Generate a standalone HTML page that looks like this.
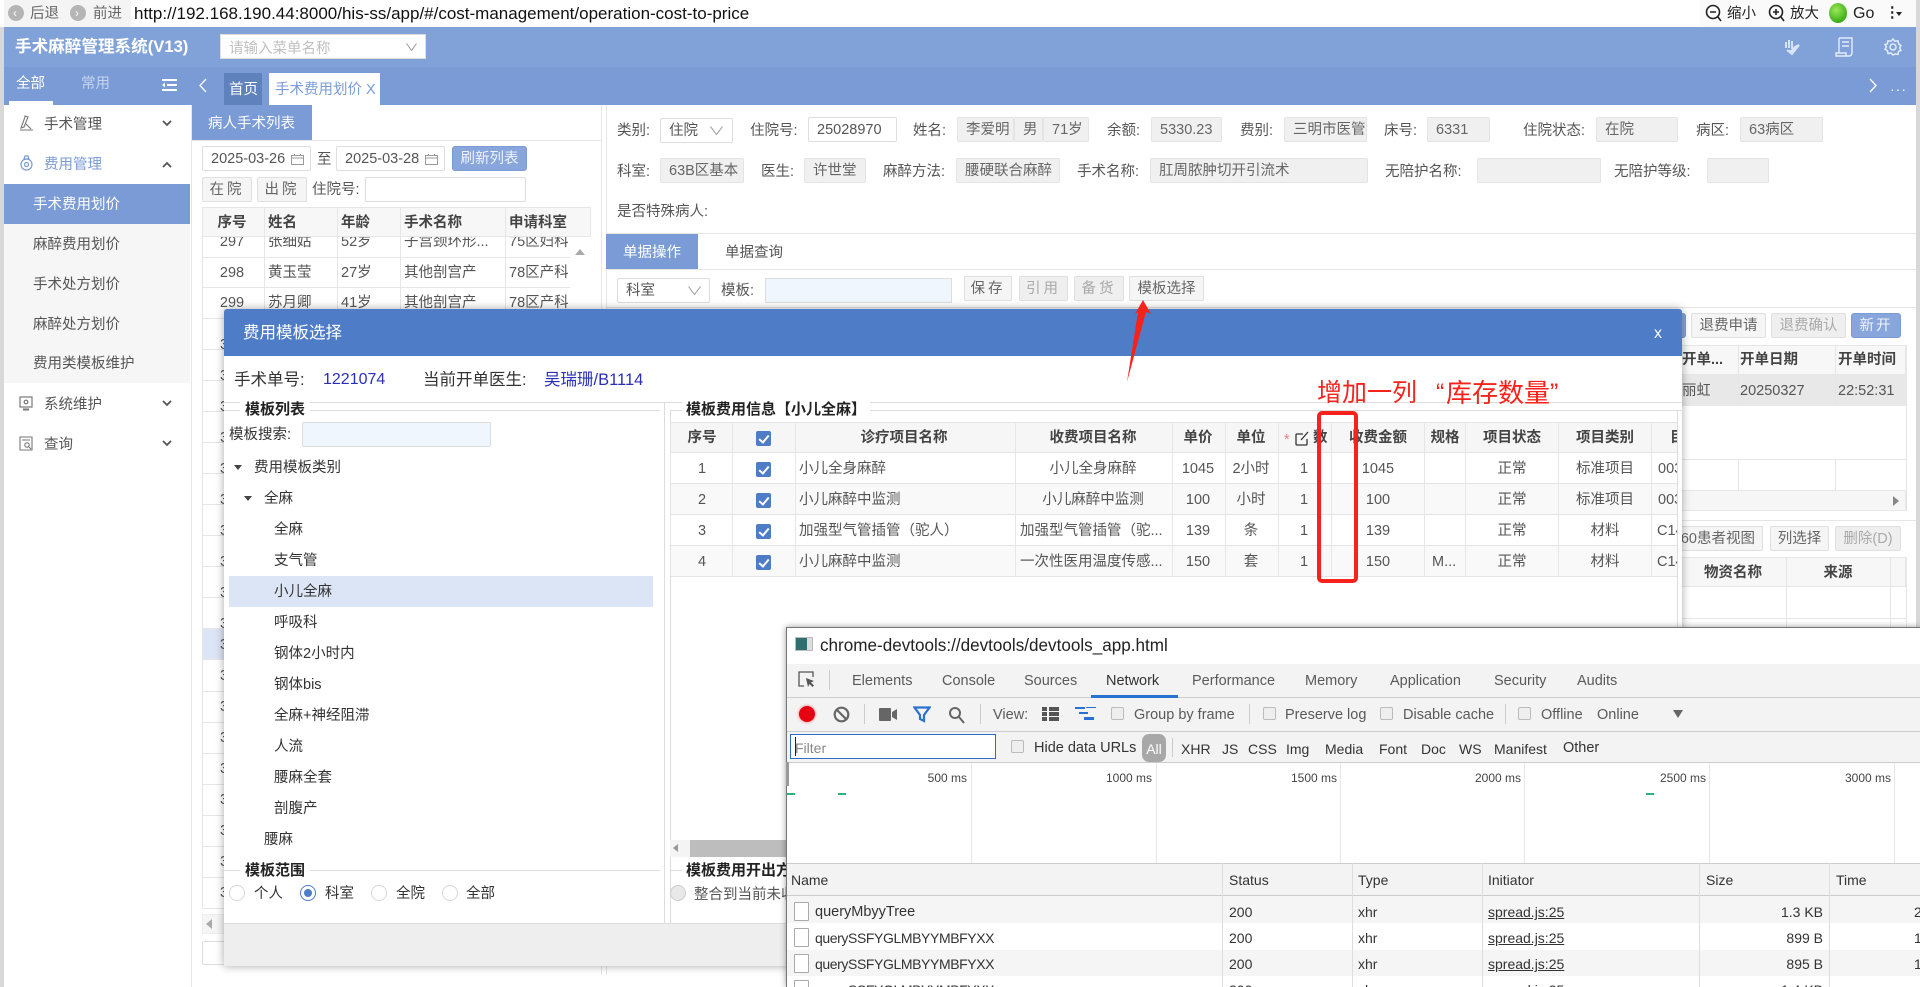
<!DOCTYPE html>
<html lang="zh"><head><meta charset="utf-8"><title>手术费用划价</title>
<style>
*{box-sizing:border-box}
html{margin:0;padding:0;width:1920px;height:987px;overflow:hidden;background:#fff}
body{position:relative;margin:0;padding:0;width:1920px;height:987px;overflow:hidden;background:#fff;font-family:"Liberation Sans","Noto Sans CJK SC",sans-serif;font-size:14.5px;color:#555}
.t{position:absolute;white-space:nowrap;line-height:20px;height:20px;margin-top:1px}
.c{transform:translateX(-50%)}
.r{transform:translateX(-100%)}
.b{position:absolute}
.g{position:absolute;height:25px;background:#f0f0f0;border:1px solid #e4e4e4;border-radius:2px;padding:0 0 0 8px;line-height:24px;overflow:hidden;white-space:nowrap;color:#666}
.w{position:absolute;height:25px;background:#fff;border:1px solid #ddd;border-radius:2px;padding-left:8px;line-height:24px;white-space:nowrap;overflow:hidden;color:#555}
.btn{position:absolute;height:25px;background:#f5f5f5;border:1px solid #e0e0e0;border-radius:2px;text-align:center;line-height:24px;white-space:nowrap;overflow:hidden;color:#666}
.dis{color:#aaa;background:#efefef}
.pri{background:#88a6dc;border-color:#7a9bd5;border-radius:3px;color:#eef3fc}
.hl{position:absolute;height:1px;background:#e6e6e6}
.vl{position:absolute;width:1px;background:#e6e6e6}
.chev{position:absolute}
.m{color:#333}
.h{font-weight:bold;color:#444}
.d{font-size:14.5px;color:#5a5a5a}
.dn{font-size:14px;color:#333}
.cb{position:absolute;width:15px;height:15px;background:#4e7cc7;border-radius:2px}
.cb:after{content:"";position:absolute;left:5px;top:2px;width:4px;height:8px;border:solid #fff;border-width:0 2px 2px 0;transform:rotate(40deg)}
.dc{position:absolute;width:13px;height:13px;background:#eee;border:1px solid #bbb;border-radius:2px}
.rd{position:absolute;width:16px;height:16px;border:1px solid #d8d8d8;border-radius:50%;background:#fff}
.f{position:absolute;left:794px;width:15px;height:19px;background:#fff;border:1px solid #aaa;border-radius:1px}
</style></head><body>

<!-- browser bar -->
<div class="b" style="left:0;top:0;width:1920px;height:27px;background:#fff"></div>
<div class="b" style="left:4px;top:0;width:127px;height:27px;background:#f4f4f4"></div>
<div class="b" style="left:8px;top:5px;width:16px;height:16px;border-radius:50%;background:#b5b5b5"></div>
<span class="t" style="left:13px;top:2px;color:#fff;font-size:12px">‹</span>
<span class="t" style="left:30px;top:3px;color:#666">后退</span>
<div class="b" style="left:70px;top:5px;width:16px;height:16px;border-radius:50%;background:#b5b5b5"></div>
<span class="t" style="left:75px;top:2px;color:#fff;font-size:12px">›</span>
<span class="t" style="left:93px;top:3px;color:#666">前进</span>
<span class="t" style="left:134px;top:3px;color:#111;font-size:17px">http://192.168.190.44:8000/his-ss/app/#/cost-management/operation-cost-to-price</span>
<div class="b" style="left:1700px;top:0;width:216px;height:27px;background:#fafafa"></div>
<svg class="b" style="left:1705px;top:4px" width="18" height="19" viewBox="0 0 18 19" fill="none" stroke="#222" stroke-width="1.600"><circle cx="8" cy="8" r="6.500"/><path d="M5 8h6M13 13l3 4"/></svg>
<span class="t" style="left:1727px;top:3px;color:#222">缩小</span>
<svg class="b" style="left:1768px;top:4px" width="18" height="19" viewBox="0 0 18 19" fill="none" stroke="#222" stroke-width="1.600"><circle cx="8" cy="8" r="6.500"/><path d="M5 8h6M8 5v6M13 13l3 4"/></svg>
<span class="t" style="left:1790px;top:3px;color:#222">放大</span>
<div class="b" style="left:1829px;top:3px;width:18px;height:20px;border-radius:50%;background:radial-gradient(circle at 40% 35%,#9be85a,#3fae18 70%)"></div>
<span class="t" style="left:1853px;top:3px;color:#222;font-size:16px">Go</span>
<span class="t" style="left:1885px;top:2px;color:#222;font-weight:bold">⋮</span>
<div class="b" style="left:1896px;top:12px;border:3px solid transparent;border-top:4px solid #222"></div>

<!-- header -->
<div class="b" style="left:4px;top:27px;width:1912px;height:40px;background:#81a2d9"></div>
<div class="b" style="left:4px;top:67px;width:1912px;height:38px;background:#7a9bd5"></div>
<span class="t" style="left:15px;top:36px;color:#fff;font-weight:bold;font-size:16.600px">手术麻醉管理系统(V13)</span>
<div class="b" style="left:220px;top:34px;width:206px;height:25px;background:#fff;border:1px solid #ddd"><span style="position:absolute;left:8px;top:2px;color:#c0c0c0">请输入菜单名称</span></div>
<svg class="chev" style="left:406px;top:43px" width="11" height="8" viewBox="0 0 11 8" fill="none" stroke="#999"><path d="M.5 .5l5 7 5-7"/></svg>
<svg class="b" style="left:1783px;top:37px" width="18" height="20" viewBox="0 0 18 20" fill="none" stroke="#d8e5f8" stroke-width="2"><path d="M3 5v6M6 3v8M9 4v8"/><path d="M4 13l5 4 7-9-4 2-3 3" fill="#d8e5f8"/></svg>
<svg class="b" style="left:1834px;top:37px" width="20" height="20" viewBox="0 0 20 20" fill="none" stroke="#e4edfa" stroke-width="1.400"><path d="M5 1h13v15a3 3 0 0 1-3 3H2v-3h10v3M5 1v15M8 5h7M8 9h7"/></svg>
<svg class="b" style="left:1884px;top:38px" width="18" height="18" viewBox="0 0 18 18" fill="none" stroke="#e4edfa" stroke-width="1.500"><path d="M9 1l2 2.200 3-.4.6 3 2.400 1.800-1.400 2.400 1.400 2.400-2.400 1-.6 3-3-.4L9 17l-2-1.900-3 .4-.6-3L1 11.400 2.400 9 1 6.600l2.400-.8.6-3 3 .4z"/><circle cx="9" cy="9" r="3"/></svg>
<span class="t" style="left:16px;top:73px;color:#fff">全部</span>
<span class="t" style="left:81px;top:73px;color:#c5d5ef">常用</span>
<div class="b" style="left:9px;top:101px;width:44px;height:4px;background:#fff"></div>
<svg class="b" style="left:162px;top:78px" width="15" height="14" viewBox="0 0 15 14" fill="#fff"><path d="M0 1h15v2H0zM5 6h10v2H5zM0 11h15v2H0zM3 4.500v5L0 7z"/></svg>
<svg class="b" style="left:198px;top:78px" width="10" height="15" viewBox="0 0 10 15" fill="none" stroke="#fff" stroke-width="1.300"><path d="M8 1L2 7.500 8 14"/></svg>
<div class="b" style="left:224px;top:73px;width:38px;height:32px;background:#5f82bd"></div>
<span class="t" style="left:229px;top:79px;color:#fff">首页</span>
<div class="b" style="left:269px;top:73px;width:111px;height:32px;background:#fff"></div>
<span class="t" style="left:275px;top:79px;color:#7a9bd5">手术费用划价 X</span>
<svg class="b" style="left:1868px;top:78px" width="10" height="15" viewBox="0 0 10 15" fill="none" stroke="#fff" stroke-width="1.300"><path d="M2 1l6 6.500L2 14"/></svg>
<span class="t" style="left:1890px;top:78px;color:#fff;font-size:14px;letter-spacing:1px">···</span>

<!-- page edges -->
<div class="b" style="left:0;top:27px;width:4px;height:960px;background:#d8d8d8"></div>
<div class="b" style="left:1916px;top:0;width:4px;height:627px;background:#d8d8d8"></div>

<!-- sidebar -->
<div class="vl" style="left:191px;top:105px;height:882px"></div>
<div class="b" style="left:4px;top:224px;width:186px;height:159px;background:#f6f6f6"></div>
<div class="b" style="left:4px;top:184px;width:186px;height:40px;background:#7a9bd5"></div>
<svg class="b" style="left:19px;top:115px" width="15" height="16" viewBox="0 0 15 16" fill="none" stroke="#777" stroke-width="1.100"><path d="M6 2L2 13l3-1 4-10-3-1zM1 15h13M7 9l5 5"/></svg>
<span class="t" style="left:44px;top:114px;color:#555">手术管理</span>
<svg class="b" style="left:162px;top:120px" width="10" height="7" viewBox="0 0 10 7" fill="none" stroke="#555" stroke-width="1.800"><path d="M1 1l4 4 4-4"/></svg>
<svg class="b" style="left:20px;top:155px" width="13" height="16" viewBox="0 0 13 16" fill="none" stroke="#7a9bd5" stroke-width="1.200"><circle cx="6.500" cy="9.500" r="5.500"/><circle cx="6.500" cy="9.500" r="2"/><path d="M5 1h3l1 3H4z"/></svg>
<span class="t" style="left:44px;top:154px;color:#7a9bd5">费用管理</span>
<svg class="b" style="left:162px;top:161px" width="10" height="7" viewBox="0 0 10 7" fill="none" stroke="#555" stroke-width="1.800"><path d="M1 6l4-4 4 4"/></svg>
<span class="t" style="left:33px;top:194px;color:#fff">手术费用划价</span>
<span class="t" style="left:33px;top:234px">麻醉费用划价</span>
<span class="t" style="left:33px;top:274px">手术处方划价</span>
<span class="t" style="left:33px;top:314px">麻醉处方划价</span>
<span class="t" style="left:33px;top:353px">费用类模板维护</span>
<svg class="b" style="left:19px;top:396px" width="14" height="15" viewBox="0 0 14 15" fill="none" stroke="#777" stroke-width="1.200"><rect x="1" y="1" width="12" height="10"/><circle cx="7" cy="6" r="1.800"/><path d="M4 13.500h6" stroke-width="2"/></svg>
<span class="t" style="left:44px;top:394px;color:#555">系统维护</span>
<svg class="b" style="left:162px;top:400px" width="10" height="7" viewBox="0 0 10 7" fill="none" stroke="#555" stroke-width="1.800"><path d="M1 1l4 4 4-4"/></svg>
<svg class="b" style="left:19px;top:436px" width="14" height="15" viewBox="0 0 14 15" fill="none" stroke="#777" stroke-width="1.100"><path d="M1 1h12v13H1zM3 4h8"/><circle cx="8" cy="9" r="2.200"/><path d="M10 11l2 2"/></svg>
<span class="t" style="left:44px;top:434px;color:#555">查询</span>
<svg class="b" style="left:162px;top:440px" width="10" height="7" viewBox="0 0 10 7" fill="none" stroke="#555" stroke-width="1.800"><path d="M1 1l4 4 4-4"/></svg>

<!-- left patient list -->
<div class="b" style="left:192px;top:105px;width:120px;height:36px;background:#7a9bd5"></div>
<span class="t" style="left:208px;top:113px;color:#fff">病人手术列表</span>
<div class="hl" style="left:192px;top:140px;width:409px"></div>
<div class="vl" style="left:601px;top:105px;height:870px"></div>
<div class="vl" style="left:606px;top:105px;height:870px"></div>
<div class="w" style="left:202px;top:146px;width:109px">2025-03-26</div>
<svg class="b" style="left:291px;top:153px" width="13" height="12" viewBox="0 0 13 12" fill="none" stroke="#999"><path d="M.5 2.500h12v9H.5zM.5 5h12M3.500 1v2M9.500 1v2"/></svg>
<span class="t" style="left:317px;top:149px">至</span>
<div class="w" style="left:336px;top:146px;width:109px">2025-03-28</div>
<svg class="b" style="left:425px;top:153px" width="13" height="12" viewBox="0 0 13 12" fill="none" stroke="#999"><path d="M.5 2.500h12v9H.5zM.5 5h12M3.500 1v2M9.500 1v2"/></svg>
<div class="btn pri" style="left:452px;top:146px;width:75px">刷新列表</div>
<div class="btn" style="left:202px;top:177px;width:50px;letter-spacing:3px">在院</div>
<div class="btn" style="left:257px;top:177px;width:50px;letter-spacing:3px">出院</div>
<span class="t" style="left:312px;top:179px">住院号:</span>
<div class="w" style="left:365px;top:177px;width:161px"></div>
<div class="b" style="left:202px;top:207px;width:389px;height:30px;background:#f7f7f7;border:1px solid #e6e6e6"></div>
<span class="t h c" style="left:232px;top:212px">序号</span>
<span class="t h" style="left:268px;top:212px">姓名</span>
<span class="t h" style="left:341px;top:212px">年龄</span>
<span class="t h" style="left:404px;top:212px">手术名称</span>
<span class="t h" style="left:509px;top:212px">申请科室</span>
<div class="b" style="left:202px;top:237px;width:368px;height:81px;overflow:hidden">
<span class="t c" style="left:30px;top:-6px">297</span><span class="t" style="left:66px;top:-6px">张细姑</span><span class="t" style="left:139px;top:-6px">52岁</span><span class="t" style="left:202px;top:-6px">子宫颈环形...</span><span class="t" style="left:307px;top:-6px">75区妇科</span>
<span class="t c" style="left:30px;top:25px">298</span><span class="t" style="left:66px;top:25px">黄玉莹</span><span class="t" style="left:139px;top:25px">27岁</span><span class="t" style="left:202px;top:25px">其他剖宫产</span><span class="t" style="left:307px;top:25px">78区产科</span>
<span class="t c" style="left:30px;top:55px">299</span><span class="t" style="left:66px;top:55px">苏月卿</span><span class="t" style="left:139px;top:55px">41岁</span><span class="t" style="left:202px;top:55px">其他剖宫产</span><span class="t" style="left:307px;top:55px">78区产科</span>
</div>
<div class="hl" style="left:202px;top:257px;width:368px"></div>
<div class="hl" style="left:202px;top:287px;width:368px"></div>
<div class="hl" style="left:202px;top:318px;width:368px"></div>
<div class="vl" style="left:202px;top:207px;height:700px"></div>
<div class="vl" style="left:264px;top:207px;height:110px"></div>
<div class="vl" style="left:337px;top:207px;height:110px"></div>
<div class="vl" style="left:400px;top:207px;height:110px"></div>
<div class="vl" style="left:505px;top:207px;height:110px"></div>
<div class="b" style="left:575px;top:244px;border:5px solid transparent;border-bottom:6px solid #aaa"></div>
<div class="b" style="left:203px;top:628px;width:21px;height:31px;background:#dce5f5"></div>
<div class="hl" style="left:202px;top:349px;width:22px"></div><div class="hl" style="left:202px;top:380px;width:22px"></div><div class="hl" style="left:202px;top:411px;width:22px"></div><div class="hl" style="left:202px;top:442px;width:22px"></div><div class="hl" style="left:202px;top:473px;width:22px"></div><div class="hl" style="left:202px;top:504px;width:22px"></div><div class="hl" style="left:202px;top:535px;width:22px"></div><div class="hl" style="left:202px;top:566px;width:22px"></div><div class="hl" style="left:202px;top:597px;width:22px"></div><div class="hl" style="left:202px;top:628px;width:22px"></div><div class="hl" style="left:202px;top:659px;width:22px"></div><div class="hl" style="left:202px;top:691px;width:22px"></div><div class="hl" style="left:202px;top:722px;width:22px"></div><div class="hl" style="left:202px;top:753px;width:22px"></div><div class="hl" style="left:202px;top:784px;width:22px"></div><div class="hl" style="left:202px;top:815px;width:22px"></div><div class="hl" style="left:202px;top:846px;width:22px"></div><div class="hl" style="left:202px;top:877px;width:22px"></div><div class="hl" style="left:202px;top:908px;width:22px"></div>
<span class="t" style="left:220px;top:334px">3</span><span class="t" style="left:220px;top:365px">3</span><span class="t" style="left:220px;top:396px">3</span><span class="t" style="left:220px;top:427px">3</span><span class="t" style="left:220px;top:458px">3</span><span class="t" style="left:220px;top:489px">3</span><span class="t" style="left:220px;top:520px">3</span><span class="t" style="left:220px;top:551px">3</span><span class="t" style="left:220px;top:582px">3</span><span class="t" style="left:220px;top:613px">3</span><span class="t" style="left:220px;top:634px">3</span><span class="t" style="left:220px;top:665px">3</span><span class="t" style="left:220px;top:696px">3</span><span class="t" style="left:220px;top:727px">3</span><span class="t" style="left:220px;top:758px">3</span><span class="t" style="left:220px;top:789px">3</span><span class="t" style="left:220px;top:820px">3</span><span class="t" style="left:220px;top:851px">3</span><span class="t" style="left:220px;top:882px">3</span>
<div class="b" style="left:202px;top:914px;width:24px;height:20px;background:#f5f5f5;border:1px solid #eee"></div>
<div class="b" style="left:206px;top:919px;border:5px solid transparent;border-right:6px solid #aaa;border-left:0"></div>
<div class="b" style="left:202px;top:941px;width:24px;height:24px;background:#fff;border:1px solid #ddd;border-radius:2px"></div>

<!-- right main form -->
<span class="t" style="left:617px;top:120px">类别:</span>
<div class="w" style="left:660px;top:118px;width:73px">住院</div>
<svg class="chev" style="left:710px;top:126px" width="13" height="9" viewBox="0 0 13 9" fill="none" stroke="#999"><path d="M.5 .5l6 8 6-8"/></svg>
<span class="t" style="left:750px;top:120px">住院号:</span>
<div class="w" style="left:808px;top:117px;width:89px">25028970</div>
<span class="t" style="left:913px;top:120px">姓名:</span>
<div class="g" style="left:957px;top:117px;width:57px">李爱明</div>
<div class="g" style="left:1014px;top:117px;width:29px">男</div>
<div class="g" style="left:1043px;top:117px;width:46px">71岁</div>
<span class="t" style="left:1107px;top:120px">余额:</span>
<div class="g" style="left:1151px;top:117px;width:71px">5330.23</div>
<span class="t" style="left:1240px;top:120px">费别:</span>
<div class="g" style="left:1284px;top:117px;width:83px;padding-right:7px">三明市医管</div>
<span class="t" style="left:1384px;top:120px">床号:</span>
<div class="g" style="left:1427px;top:117px;width:63px">6331</div>
<span class="t" style="left:1523px;top:120px">住院状态:</span>
<div class="g" style="left:1596px;top:117px;width:82px">在院</div>
<span class="t" style="left:1696px;top:120px">病区:</span>
<div class="g" style="left:1740px;top:117px;width:83px">63病区</div>

<span class="t" style="left:617px;top:161px">科室:</span>
<div class="g" style="left:660px;top:158px;width:84px">63B区基本</div>
<span class="t" style="left:761px;top:161px">医生:</span>
<div class="g" style="left:804px;top:158px;width:62px">许世堂</div>
<span class="t" style="left:883px;top:161px">麻醉方法:</span>
<div class="g" style="left:956px;top:158px;width:104px">腰硬联合麻醉</div>
<span class="t" style="left:1077px;top:161px">手术名称:</span>
<div class="g" style="left:1150px;top:158px;width:218px">肛周脓肿切开引流术</div>
<span class="t" style="left:1385px;top:161px">无陪护名称:</span>
<div class="g" style="left:1477px;top:158px;width:124px"></div>
<span class="t" style="left:1614px;top:161px">无陪护等级:</span>
<div class="g" style="left:1707px;top:158px;width:62px"></div>
<span class="t" style="left:617px;top:201px">是否特殊病人:</span>
<div class="hl" style="left:606px;top:233px;width:1310px"></div>
<div class="b" style="left:606px;top:234px;width:92px;height:36px;background:#7a9bd5"></div>
<span class="t" style="left:623px;top:242px;color:#fff">单据操作</span>
<span class="t" style="left:725px;top:242px">单据查询</span>
<div class="hl" style="left:606px;top:269px;width:1310px"></div>
<div class="w" style="left:617px;top:278px;width:93px">科室</div>
<svg class="chev" style="left:688px;top:286px" width="13" height="9" viewBox="0 0 13 9" fill="none" stroke="#999"><path d="M.5 .5l6 8 6-8"/></svg>
<span class="t" style="left:721px;top:280px">模板:</span>
<div class="b" style="left:765px;top:278px;width:187px;height:25px;background:#f0f6fe;border:1px solid #ddd"></div>
<div class="btn" style="left:964px;top:276px;width:48px;letter-spacing:3px">保存</div>
<div class="btn dis" style="left:1019px;top:276px;width:49px;letter-spacing:3px">引用</div>
<div class="btn dis" style="left:1074px;top:276px;width:50px;letter-spacing:3px">备货</div>
<div class="btn" style="left:1129px;top:276px;width:75px">模板选择</div>
<div class="hl" style="left:606px;top:307px;width:1310px"></div>

<!-- behind modal right -->
<div class="btn pri" style="left:1670px;top:313px;width:16px"></div>
<div class="btn" style="left:1691px;top:313px;width:75px">退费申请</div>
<div class="btn dis" style="left:1771px;top:313px;width:75px">退费确认</div>
<div class="btn pri" style="left:1851px;top:313px;width:50px;letter-spacing:2px">新开</div>
<div class="b" style="left:1670px;top:345px;width:236px;height:30px;background:#f7f7f7;border:1px solid #e6e6e6"></div>
<div class="b" style="left:1670px;top:375px;width:236px;height:31px;background:#e8e8e8"></div>
<span class="t h" style="left:1682px;top:349px">开单...</span>
<span class="t h" style="left:1740px;top:349px">开单日期</span>
<span class="t h" style="left:1838px;top:349px">开单时间</span>
<span class="t" style="left:1682px;top:380px;width:28px;overflow:hidden">丽虹</span>
<span class="t" style="left:1740px;top:380px">20250327</span>
<span class="t" style="left:1838px;top:380px">22:52:31</span>
<div class="vl" style="left:1738px;top:345px;height:61px"></div>
<div class="vl" style="left:1835px;top:345px;height:61px"></div>
<div class="vl" style="left:1738px;top:459px;height:31px"></div>
<div class="vl" style="left:1835px;top:459px;height:31px"></div>
<div class="vl" style="left:1906px;top:345px;height:166px"></div>
<div class="hl" style="left:1670px;top:459px;width:236px"></div>
<div class="b" style="left:1670px;top:490px;width:236px;height:21px;background:#f6f6f6;border:1px solid #e8e8e8"></div>
<div class="b" style="left:1893px;top:496px;border:5px solid transparent;border-left:6px solid #888;border-right:0"></div>
<div class="hl" style="left:1670px;top:520px;width:246px"></div>
<div class="btn" style="left:1670px;top:526px;width:93px;text-align:right;padding-right:7px">60患者视图</div>
<div class="btn" style="left:1770px;top:526px;width:59px">列选择</div>
<div class="btn dis" style="left:1835px;top:526px;width:66px">删除(D)</div>
<div class="b" style="left:1670px;top:557px;width:236px;height:30px;background:#f7f7f7;border:1px solid #e6e6e6"></div>
<span class="t h c" style="left:1733px;top:562px">物资名称</span>
<span class="t h c" style="left:1838px;top:562px">来源</span>
<div class="vl" style="left:1786px;top:557px;height:70px"></div>
<div class="vl" style="left:1890px;top:557px;height:70px"></div>
<div class="vl" style="left:1906px;top:557px;height:70px"></div>
<div class="hl" style="left:1670px;top:618px;width:236px"></div>

<!-- modal -->
<div class="b" style="left:224px;top:309px;width:1458px;height:657px;background:#fff;border-radius:3px 3px 0 0;box-shadow:0 0 9px rgba(0,0,0,.35)"></div>
<div class="b" style="left:224px;top:309px;width:1458px;height:47px;background:#4e7cc7;border-radius:3px 3px 0 0"></div>
<span class="t" style="left:243px;top:322px;color:#fff;font-size:16.500px">费用模板选择</span>
<span class="t c" style="left:1658px;top:323px;color:#fff;font-size:16px">x</span>
<span class="t" style="left:234px;top:369px;color:#333;font-size:16.500px">手术单号:</span>
<span class="t" style="left:323px;top:369px;color:#2a2fb8;font-size:16px">1221074</span>
<span class="t" style="left:423px;top:369px;color:#333;font-size:16.500px">当前开单医生:</span>
<span class="t" style="left:544px;top:369px;color:#2a2fb8;font-size:16.500px">吴瑞珊/B1114</span>
<div class="hl" style="left:224px;top:402px;width:1458px;background:#ddd"></div>
<div class="hl" style="left:224px;top:410px;width:436px;background:#ddd"></div>
<div class="hl" style="left:670px;top:410px;width:1012px;background:#ddd"></div>
<div class="vl" style="left:664px;top:402px;height:521px;background:#ddd"></div>
<div class="vl" style="left:670px;top:410px;height:513px;background:#ddd"></div>
<span class="t m" style="left:240px;top:399px;background:#fff;padding:0 5px;font-weight:bold;font-size:15px;color:#222">模板列表</span>
<span class="t m" style="left:682px;top:399px;background:#fff;padding:0 4px;color:#222;font-weight:bold;font-size:15px">模板费用信息【小儿全麻】</span>
<span class="t m" style="left:229px;top:424px">模板搜索:</span>
<div class="b" style="left:302px;top:422px;width:189px;height:25px;background:#f0f6fe;border:1px solid #ddd;border-radius:2px"></div>
<div class="b" style="left:234px;top:465px;border:4.500px solid transparent;border-top:5px solid #444"></div>
<span class="t m" style="left:254px;top:457px">费用模板类别</span>
<div class="b" style="left:244px;top:496px;border:4.500px solid transparent;border-top:5px solid #444"></div>
<span class="t m" style="left:264px;top:488px">全麻</span>
<span class="t m" style="left:274px;top:519px">全麻</span>
<span class="t m" style="left:274px;top:550px">支气管</span>
<div class="b" style="left:229px;top:576px;width:424px;height:31px;background:#dce5f5"></div>
<span class="t m" style="left:274px;top:581px">小儿全麻</span>
<span class="t m" style="left:274px;top:612px">呼吸科</span>
<span class="t m" style="left:274px;top:643px">钢体2小时内</span>
<span class="t m" style="left:274px;top:674px">钢体bis</span>
<span class="t m" style="left:274px;top:705px">全麻+神经阻滞</span>
<span class="t m" style="left:274px;top:736px">人流</span>
<span class="t m" style="left:274px;top:767px">腰麻全套</span>
<span class="t m" style="left:274px;top:798px">剖腹产</span>
<span class="t m" style="left:264px;top:829px">腰麻</span>
<div class="hl" style="left:224px;top:870px;width:436px;background:#ddd"></div>
<span class="t m" style="left:240px;top:860px;background:#fff;padding:0 5px;font-weight:bold;font-size:15px;color:#222">模板范围</span>
<div class="rd" style="left:229px;top:885px"></div><span class="t m" style="left:254px;top:883px">个人</span>
<div class="rd" style="left:300px;top:885px;border-color:#4e7cc7"></div><div class="b" style="left:304px;top:889px;width:8px;height:8px;border-radius:50%;background:#4e7cc7"></div><span class="t m" style="left:325px;top:883px">科室</span>
<div class="rd" style="left:371px;top:885px"></div><span class="t m" style="left:396px;top:883px">全院</span>
<div class="rd" style="left:442px;top:885px"></div><span class="t m" style="left:466px;top:883px">全部</span>

<!-- modal table -->
<div class="b" style="left:670px;top:422px;width:1007px;height:154px;border:1px solid #e4e4e4;border-right:0"></div>
<div class="b" style="left:671px;top:423px;width:1006px;height:29px;background:#f6f6f6"></div>
<div class="b" style="left:671px;top:483px;width:1006px;height:31px;background:#f9f9f9"></div>
<div class="b" style="left:671px;top:545px;width:1006px;height:31px;background:#f9f9f9"></div>
<div class="hl" style="left:670px;top:452px;width:1007px;background:#e4e4e4"></div>
<div class="hl" style="left:670px;top:483px;width:1007px;background:#e4e4e4"></div>
<div class="hl" style="left:670px;top:514px;width:1007px;background:#e4e4e4"></div>
<div class="hl" style="left:670px;top:545px;width:1007px;background:#e4e4e4"></div>
<div class="hl" style="left:670px;top:576px;width:1007px;background:#e4e4e4"></div>
<div class="vl" style="left:732px;top:422px;height:154px"></div><div class="vl" style="left:795px;top:422px;height:154px"></div><div class="vl" style="left:1015px;top:422px;height:154px"></div><div class="vl" style="left:1172px;top:422px;height:154px"></div><div class="vl" style="left:1225px;top:422px;height:154px"></div><div class="vl" style="left:1278px;top:422px;height:154px"></div><div class="vl" style="left:1331px;top:422px;height:154px"></div><div class="vl" style="left:1424px;top:422px;height:154px"></div><div class="vl" style="left:1465px;top:422px;height:154px"></div><div class="vl" style="left:1558px;top:422px;height:154px"></div><div class="vl" style="left:1651px;top:422px;height:154px"></div><div class="vl" style="left:1677px;top:410px;height:513px;background:#ddd"></div>
<span class="t h c" style="left:702px;top:427px">序号</span>
<div class="cb" style="left:756px;top:431px"></div>
<span class="t h c" style="left:904px;top:427px">诊疗项目名称</span>
<span class="t h c" style="left:1093px;top:427px">收费项目名称</span>
<span class="t h c" style="left:1198px;top:427px">单价</span>
<span class="t h c" style="left:1251px;top:427px">单位</span>
<span class="t" style="left:1284px;top:429px;color:#f08080">*</span>
<svg class="b" style="left:1295px;top:431px" width="15" height="15" viewBox="0 0 15 15" fill="none" stroke="#333" stroke-width="1.300"><path d="M12 8v5a1 1 0 0 1-1 1H2a1 1 0 0 1-1-1V4a1 1 0 0 1 1-1h6M6 9l7-8"/></svg>
<span class="t h" style="left:1313px;top:427px">数</span>
<span class="t h c" style="left:1378px;top:427px">收费金额</span>
<span class="t h c" style="left:1445px;top:427px">规格</span>
<span class="t h c" style="left:1512px;top:427px">项目状态</span>
<span class="t h c" style="left:1605px;top:427px">项目类别</span>
<span class="t h" style="left:1670px;top:427px;width:7px;overflow:hidden">目</span>

<span class="t c" style="left:702px;top:458px">1</span><div class="cb" style="left:756px;top:462px"></div><span class="t" style="left:799px;top:458px">小儿全身麻醉</span><span class="t c" style="left:1093px;top:458px">小儿全身麻醉</span><span class="t c" style="left:1198px;top:458px">1045</span><span class="t c" style="left:1251px;top:458px">2小时</span><span class="t c" style="left:1304px;top:458px">1</span><span class="t c" style="left:1378px;top:458px">1045</span><span class="t c" style="left:1512px;top:458px">正常</span><span class="t c" style="left:1605px;top:458px">标准项目</span><span class="t" style="left:1658px;top:458px;width:19px;overflow:hidden">003</span>
<span class="t c" style="left:702px;top:489px">2</span><div class="cb" style="left:756px;top:493px"></div><span class="t" style="left:799px;top:489px">小儿麻醉中监测</span><span class="t c" style="left:1093px;top:489px">小儿麻醉中监测</span><span class="t c" style="left:1198px;top:489px">100</span><span class="t c" style="left:1251px;top:489px">小时</span><span class="t c" style="left:1304px;top:489px">1</span><span class="t c" style="left:1378px;top:489px">100</span><span class="t c" style="left:1512px;top:489px">正常</span><span class="t c" style="left:1605px;top:489px">标准项目</span><span class="t" style="left:1658px;top:489px;width:19px;overflow:hidden">003</span>
<span class="t c" style="left:702px;top:520px">3</span><div class="cb" style="left:756px;top:524px"></div><span class="t" style="left:799px;top:520px">加强型气管插管（驼人）</span><span class="t" style="left:1020px;top:520px;width:150px;overflow:hidden">加强型气管插管（驼...</span><span class="t c" style="left:1198px;top:520px">139</span><span class="t c" style="left:1251px;top:520px">条</span><span class="t c" style="left:1304px;top:520px">1</span><span class="t c" style="left:1378px;top:520px">139</span><span class="t c" style="left:1512px;top:520px">正常</span><span class="t c" style="left:1605px;top:520px">材料</span><span class="t" style="left:1657px;top:520px;width:20px;overflow:hidden">C14</span>
<span class="t c" style="left:702px;top:551px">4</span><div class="cb" style="left:756px;top:555px"></div><span class="t" style="left:799px;top:551px">小儿麻醉中监测</span><span class="t" style="left:1020px;top:551px;width:150px;overflow:hidden">一次性医用温度传感...</span><span class="t c" style="left:1198px;top:551px">150</span><span class="t c" style="left:1251px;top:551px">套</span><span class="t c" style="left:1304px;top:551px">1</span><span class="t c" style="left:1378px;top:551px">150</span><span class="t" style="left:1432px;top:551px">M...</span><span class="t c" style="left:1512px;top:551px">正常</span><span class="t c" style="left:1605px;top:551px">材料</span><span class="t" style="left:1657px;top:551px;width:20px;overflow:hidden">C14</span>

<!-- modal bottom under devtools -->
<div class="b" style="left:670px;top:840px;width:1007px;height:17px;background:#f4f4f4"></div>
<div class="b" style="left:690px;top:840px;width:100px;height:17px;background:#bdbdbd"></div>
<div class="b" style="left:673px;top:844px;border:4px solid transparent;border-right:5px solid #999;border-left:0"></div>
<div class="hl" style="left:670px;top:870px;width:1012px;background:#ddd"></div>
<span class="t m" style="left:682px;top:860px;background:#fff;padding:0 4px;color:#222;font-weight:bold;font-size:15px">模板费用开出方式</span>
<div class="rd" style="left:670px;top:885px;background:#e8e8e8;border-color:#ccc"></div>
<span class="t" style="left:694px;top:884px;color:#555">整合到当前未收费单</span>
<div class="b" style="left:224px;top:923px;width:1458px;height:43px;background:#eee;border-top:1px solid #ddd"></div>

<!-- annotation -->
<svg class="b" style="left:0;top:0" width="1920" height="987"><polygon points="1143,300 1151,314 1146,312 1127,382 1138,312 1135,314" fill="#f5231c"/><rect x="1319" y="413" width="37" height="168" rx="3" fill="none" stroke="#f5231c" stroke-width="4"/></svg>
<span class="t" style="left:1317px;top:377px;height:30px;line-height:30px;font-size:25px;color:#f5231c">增加一列</span>
<span class="t" style="left:1436px;top:377px;height:30px;line-height:30px;font-size:25px;color:#f5231c">“</span>
<span class="t" style="left:1446px;top:377px;height:30px;line-height:30px;font-size:26px;color:#f5231c">库存数量</span>
<span class="t" style="left:1550px;top:377px;height:30px;line-height:30px;font-size:25px;color:#f5231c">”</span>

<!-- devtools -->
<div class="b" style="left:786px;top:627px;width:1134px;height:360px;background:#fff;border-top:1px solid #777;border-left:1px solid #777;box-shadow:0 0 6px rgba(0,0,0,.4)"></div>
<div class="b" style="left:795px;top:637px;width:18px;height:14px;background:linear-gradient(90deg,#2f6f70 70%,#ddd 70%);border:1px solid #bbb"></div>
<span class="t" style="left:820px;top:635px;color:#222;font-size:17.100px">chrome-devtools://devtools/devtools_app.html</span>
<div class="b" style="left:787px;top:664px;width:1133px;height:98px;background:#f3f3f3"></div>
<div class="hl" style="left:787px;top:697px;width:1133px;background:#ccc"></div>
<div class="hl" style="left:787px;top:731px;width:1133px;background:#ccc"></div>
<div class="hl" style="left:787px;top:762px;width:1133px;background:#ccc"></div>
<svg class="b" style="left:798px;top:671px" width="18" height="18" viewBox="0 0 18 18" fill="none" stroke="#555" stroke-width="1.300"><path d="M6 15H1V1h14v5"/><path d="M8 7l8 3-3 1.500 3 3-1.500 1.500-3-3L10 16z" fill="#555" stroke="none"/></svg>
<div class="vl" style="left:829px;top:670px;height:20px;background:#ccc"></div>
<span class="t d" style="left:852px;top:670px">Elements</span>
<span class="t d" style="left:942px;top:670px">Console</span>
<span class="t d" style="left:1024px;top:670px">Sources</span>
<span class="t d" style="left:1106px;top:670px;color:#333">Network</span>
<div class="b" style="left:1091px;top:695px;width:87px;height:3px;background:#2a72d0"></div>
<span class="t d" style="left:1192px;top:670px">Performance</span>
<span class="t d" style="left:1305px;top:670px">Memory</span>
<span class="t d" style="left:1390px;top:670px">Application</span>
<span class="t d" style="left:1494px;top:670px">Security</span>
<span class="t d" style="left:1577px;top:670px">Audits</span>

<div class="b" style="left:799px;top:706px;width:16px;height:16px;border-radius:50%;background:#e60012;box-shadow:0 0 2px 1px #f5b0b0"></div>
<svg class="b" style="left:833px;top:706px" width="17" height="17" viewBox="0 0 17 17" fill="none" stroke="#666" stroke-width="2.200"><circle cx="8.500" cy="8.500" r="6.800"/><path d="M3.500 3.500l10 10"/></svg>
<div class="vl" style="left:864px;top:704px;height:20px;background:#ccc"></div>
<svg class="b" style="left:879px;top:708px" width="18" height="13" viewBox="0 0 18 13" fill="#666"><rect width="12" height="13" rx="1"/><path d="M13 4l5-3v11l-5-3z"/></svg>
<svg class="b" style="left:913px;top:706px" width="18" height="17" viewBox="0 0 18 17" fill="none" stroke="#2a72d0" stroke-width="2.200"><path d="M1.500 1.500h15L11 9v6l-4-2V9z"/></svg>
<svg class="b" style="left:948px;top:706px" width="18" height="18" viewBox="0 0 18 18" fill="none" stroke="#666" stroke-width="2"><circle cx="7" cy="7" r="5"/><path d="M11 11l5 6"/></svg>
<div class="vl" style="left:980px;top:704px;height:20px;background:#ccc"></div>
<span class="t d" style="left:993px;top:704px">View:</span>
<svg class="b" style="left:1042px;top:707px" width="17" height="14" viewBox="0 0 17 14" fill="#555"><path d="M0 0h5v4H0zM7 0h10v4H7zM0 5h5v4H0zM7 5h10v4H7zM0 10h5v4H0zM7 10h10v4H7z"/></svg>
<svg class="b" style="left:1075px;top:707px" width="21" height="14" viewBox="0 0 21 14" fill="#2a72d0"><path d="M0 0h10v2H0zM11 0h10v1H11zM4 5h9v2H4zM9 10h10v3H9z"/></svg>
<div class="dc" style="left:1111px;top:707px"></div>
<span class="t d" style="left:1134px;top:704px">Group by frame</span>
<div class="vl" style="left:1249px;top:704px;height:20px;background:#ccc"></div>
<div class="dc" style="left:1263px;top:707px"></div>
<span class="t d" style="left:1285px;top:704px">Preserve log</span>
<div class="dc" style="left:1380px;top:707px"></div>
<span class="t d" style="left:1403px;top:704px">Disable cache</span>
<div class="vl" style="left:1505px;top:704px;height:20px;background:#ccc"></div>
<div class="dc" style="left:1518px;top:707px"></div>
<span class="t d" style="left:1541px;top:704px">Offline</span>
<span class="t d" style="left:1597px;top:704px">Online</span>
<div class="b" style="left:1673px;top:710px;border:5px solid transparent;border-top:8px solid #666"></div>

<div class="b" style="left:790px;top:734px;width:206px;height:25px;background:#fff;border:1.500px solid #2b6cc4"></div>
<span class="t" style="left:795px;top:737px;color:#888;font-size:14px">Filter</span>
<div class="vl" style="left:795px;top:737px;height:19px;background:#222"></div>
<div class="dc" style="left:1011px;top:740px"></div>
<span class="t dn" style="left:1034px;top:737px;font-size:14.500px">Hide data URLs</span>
<div class="b" style="left:1142px;top:734px;width:24px;height:28px;background:#a8a8a8;border-radius:7px"></div>
<span class="t c" style="left:1154px;top:738px;color:#fff;font-size:14px">All</span>
<div class="vl" style="left:1172px;top:738px;height:19px;background:#ccc"></div>
<span class="t dn" style="left:1181px;top:738px">XHR</span>
<span class="t dn" style="left:1222px;top:738px">JS</span>
<span class="t dn" style="left:1248px;top:738px">CSS</span>
<span class="t dn" style="left:1286px;top:738px">Img</span>
<span class="t dn" style="left:1325px;top:738px">Media</span>
<span class="t dn" style="left:1379px;top:738px">Font</span>
<span class="t dn" style="left:1421px;top:738px">Doc</span>
<span class="t dn" style="left:1459px;top:738px">WS</span>
<span class="t dn" style="left:1494px;top:738px">Manifest</span>
<span class="t dn" style="left:1563px;top:737px;font-size:14.500px">Other</span>

<div class="vl" style="left:971px;top:763px;height:100px"></div><div class="vl" style="left:1156px;top:763px;height:100px"></div><div class="vl" style="left:1340px;top:763px;height:100px"></div><div class="vl" style="left:1524px;top:763px;height:100px"></div><div class="vl" style="left:1709px;top:763px;height:100px"></div><div class="vl" style="left:1894px;top:763px;height:100px"></div>
<span class="t r" style="left:967px;top:767px;font-size:12px;color:#444">500 ms</span>
<span class="t r" style="left:1152px;top:767px;font-size:12px;color:#444">1000 ms</span>
<span class="t r" style="left:1337px;top:767px;font-size:12px;color:#444">1500 ms</span>
<span class="t r" style="left:1521px;top:767px;font-size:12px;color:#444">2000 ms</span>
<span class="t r" style="left:1706px;top:767px;font-size:12px;color:#444">2500 ms</span>
<span class="t r" style="left:1891px;top:767px;font-size:12px;color:#444">3000 ms</span>
<div class="b" style="left:786px;top:762px;width:3px;height:24px;background:#999"></div>
<div class="b" style="left:787px;top:793px;width:8px;height:2px;background:#2bb37c"></div>
<div class="b" style="left:838px;top:793px;width:8px;height:2px;background:#2bb37c"></div>
<div class="b" style="left:1646px;top:793px;width:8px;height:2px;background:#2bb37c"></div>

<div class="b" style="left:787px;top:863px;width:1133px;height:33px;background:#f3f3f3;border-top:1px solid #ccc;border-bottom:1px solid #ccc"></div>
<div class="b" style="left:787px;top:896px;width:1133px;height:27px;background:#f5f5f5"></div>
<div class="b" style="left:787px;top:950px;width:1133px;height:26px;background:#f5f5f5"></div>
<div class="vl" style="left:1222px;top:863px;height:124px;background:#ddd"></div><div class="vl" style="left:1352px;top:863px;height:124px;background:#ddd"></div><div class="vl" style="left:1482px;top:863px;height:124px;background:#ddd"></div><div class="vl" style="left:1699px;top:863px;height:124px;background:#ddd"></div><div class="vl" style="left:1829px;top:863px;height:124px;background:#ddd"></div>
<span class="t dn" style="left:791px;top:869px">Name</span><span class="t dn" style="left:1229px;top:869px">Status</span><span class="t dn" style="left:1358px;top:869px">Type</span><span class="t dn" style="left:1488px;top:869px">Initiator</span><span class="t dn" style="left:1706px;top:869px">Size</span><span class="t dn" style="left:1836px;top:869px">Time</span>

<div class="f" style="top:902px"></div><span class="t dn" style="left:815px;top:901px;font-size:14.500px">queryMbyyTree</span><span class="t dn" style="left:1229px;top:901px">200</span><span class="t dn" style="left:1358px;top:901px">xhr</span><span class="t dn" style="left:1488px;top:901px;text-decoration:underline">spread.js:25</span><span class="t r dn" style="left:1823px;top:901px">1.3 KB</span><span class="t dn" style="left:1914px;top:901px;width:6px;overflow:hidden">2</span>
<div class="f" style="top:928px"></div><span class="t dn" style="left:815px;top:927px;letter-spacing:-.4px">querySSFYGLMBYYMBFYXX</span><span class="t dn" style="left:1229px;top:927px">200</span><span class="t dn" style="left:1358px;top:927px">xhr</span><span class="t dn" style="left:1488px;top:927px;text-decoration:underline">spread.js:25</span><span class="t r dn" style="left:1823px;top:927px">899 B</span><span class="t dn" style="left:1914px;top:927px;width:6px;overflow:hidden">1</span>
<div class="f" style="top:954px"></div><span class="t dn" style="left:815px;top:953px;letter-spacing:-.4px">querySSFYGLMBYYMBFYXX</span><span class="t dn" style="left:1229px;top:953px">200</span><span class="t dn" style="left:1358px;top:953px">xhr</span><span class="t dn" style="left:1488px;top:953px;text-decoration:underline">spread.js:25</span><span class="t r dn" style="left:1823px;top:953px">895 B</span><span class="t dn" style="left:1914px;top:953px;width:6px;overflow:hidden">1</span>
<div class="f" style="top:980px"></div><span class="t dn" style="left:815px;top:979px;letter-spacing:-.4px">querySSFYGLMBYYMBFYXX</span><span class="t dn" style="left:1229px;top:979px">200</span><span class="t dn" style="left:1358px;top:979px">xhr</span><span class="t dn" style="left:1488px;top:979px;text-decoration:underline">spread.js:25</span><span class="t r dn" style="left:1823px;top:979px">1.4 KB</span>

</body></html>
